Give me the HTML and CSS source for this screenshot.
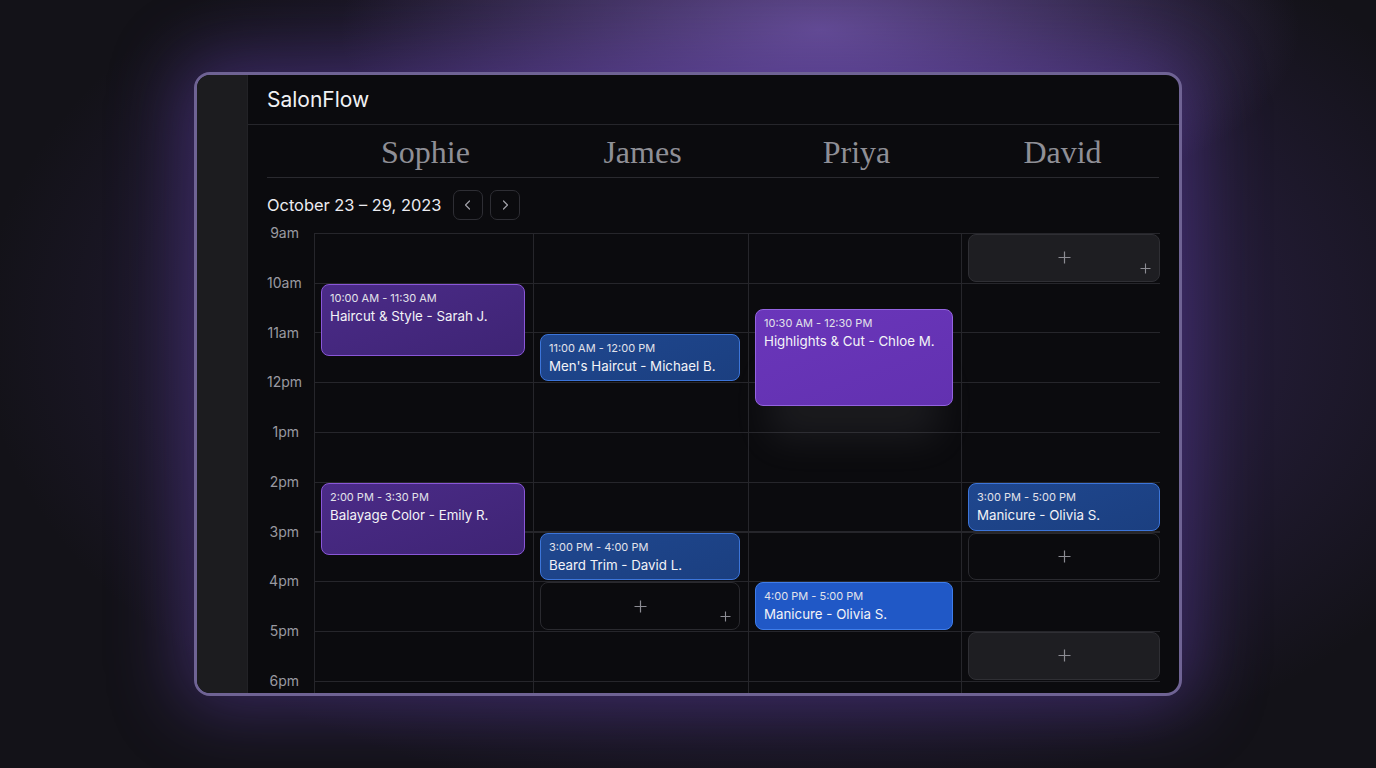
FILE: index.html
```html
<!DOCTYPE html>
<html lang="en">
<head>
  <meta charset="UTF-8">
  <title>SalonFlow – Staff Calendar</title>
  <link rel="stylesheet" href="styles.css">
</head>
<body>
  <div class="window">
    <aside class="sidebar"></aside>
    <main class="main">
      <header class="topbar">SalonFlow</header>
      <div class="content">
        <div class="staff-row">
          <span></span>
          <div class="staff">Sophie</div>
          <div class="staff">James</div>
          <div class="staff">Priya</div>
          <div class="staff">David</div>
        </div>

        <div class="week-bar">
          <span class="week-label">October 23 – 29, 2023</span>
          <button class="nav-btn" aria-label="Previous week">
            <svg width="12" height="12" viewBox="0 0 12 12"><path d="M7.5 2 L3.5 6 L7.5 10" fill="none" stroke="currentColor" stroke-width="1.2" stroke-linecap="round" stroke-linejoin="round"/></svg>
          </button>
          <button class="nav-btn" aria-label="Next week">
            <svg width="12" height="12" viewBox="0 0 12 12"><path d="M4.5 2 L8.5 6 L4.5 10" fill="none" stroke="currentColor" stroke-width="1.2" stroke-linecap="round" stroke-linejoin="round"/></svg>
          </button>
        </div>

        <div class="schedule">
          <!-- hour labels, one per two half-hour rows -->
          <div class="hour" style="grid-row: 1">9am</div>
          <div class="hour" style="grid-row: 3">10am</div>
          <div class="hour" style="grid-row: 5">11am</div>
          <div class="hour" style="grid-row: 7">12pm</div>
          <div class="hour" style="grid-row: 9">1pm</div>
          <div class="hour" style="grid-row: 11">2pm</div>
          <div class="hour" style="grid-row: 13">3pm</div>
          <div class="hour" style="grid-row: 15">4pm</div>
          <div class="hour" style="grid-row: 17">5pm</div>
          <div class="hour" style="grid-row: 19">6pm</div>

          <!-- staff lanes with hour lines -->
          <div class="lane" style="grid-column: 2"></div>
          <div class="lane" style="grid-column: 3"></div>
          <div class="lane" style="grid-column: 4"></div>
          <div class="lane" style="grid-column: 5"></div>

          <!-- Sophie -->
          <div class="event purple" style="grid-column: 2; grid-row: 3 / 6">
            <div class="ev-time">10:00 AM - 11:30 AM</div>
            <div class="ev-title">Haircut &amp; Style - Sarah J.</div>
          </div>
          <div class="event purple" style="grid-column: 2; grid-row: 11 / 14">
            <div class="ev-time">2:00 PM - 3:30 PM</div>
            <div class="ev-title">Balayage Color - Emily R.</div>
          </div>

          <!-- James -->
          <div class="event blue" style="grid-column: 3; grid-row: 5 / 7">
            <div class="ev-time">11:00 AM - 12:00 PM</div>
            <div class="ev-title">Men's Haircut - Michael B.</div>
          </div>
          <div class="event blue" style="grid-column: 3; grid-row: 13 / 15">
            <div class="ev-time">3:00 PM - 4:00 PM</div>
            <div class="ev-title">Beard Trim - David L.</div>
          </div>
          <div class="slot outline" style="grid-column: 3; grid-row: 15 / 17">
            <svg class="plus" width="13" height="13" viewBox="0 0 13 13"><path d="M6.5 0.5v12M0.5 6.5h12" stroke="currentColor" stroke-width="1.2"/></svg>
            <svg class="plus-sm" width="11" height="11" viewBox="0 0 11 11"><path d="M5.5 0.5v10M0.5 5.5h10" stroke="currentColor" stroke-width="1.1"/></svg>
          </div>

          <!-- Priya -->
          <div class="event violet" style="grid-column: 4; grid-row: 4 / 8">
            <div class="ev-time">10:30 AM - 12:30 PM</div>
            <div class="ev-title">Highlights &amp; Cut - Chloe M.</div>
          </div>
          <div class="event azure" style="grid-column: 4; grid-row: 15 / 17">
            <div class="ev-time">4:00 PM - 5:00 PM</div>
            <div class="ev-title">Manicure - Olivia S.</div>
          </div>

          <!-- David -->
          <div class="slot filled last" style="grid-column: 5; grid-row: 1 / 3">
            <svg class="plus" width="13" height="13" viewBox="0 0 13 13"><path d="M6.5 0.5v12M0.5 6.5h12" stroke="currentColor" stroke-width="1.2"/></svg>
            <svg class="plus-sm" width="11" height="11" viewBox="0 0 11 11"><path d="M5.5 0.5v10M0.5 5.5h10" stroke="currentColor" stroke-width="1.1"/></svg>
          </div>
          <div class="event blue last" style="grid-column: 5; grid-row: 11 / 13">
            <div class="ev-time">3:00 PM - 5:00 PM</div>
            <div class="ev-title">Manicure - Olivia S.</div>
          </div>
          <div class="slot outline last" style="grid-column: 5; grid-row: 13 / 15">
            <svg class="plus" width="13" height="13" viewBox="0 0 13 13"><path d="M6.5 0.5v12M0.5 6.5h12" stroke="currentColor" stroke-width="1.2"/></svg>
          </div>
          <div class="slot filled last" style="grid-column: 5; grid-row: 17 / 19">
            <svg class="plus" width="13" height="13" viewBox="0 0 13 13"><path d="M6.5 0.5v12M0.5 6.5h12" stroke="currentColor" stroke-width="1.2"/></svg>
          </div>
        </div>
      </div>
    </main>
  </div>
</body>
</html>
```

FILE: styles.css
```css
:root {
  --line: #26262b;
  --muted: #9a9aa1;
  --hour: 49.75px;
}
html, body {
  margin: 0;
  padding: 0;
}
body {
  height: 100vh;
  display: flex;
  align-items: center;
  justify-content: center;
  font-family: 'Inter', 'Noto Sans', sans-serif;
  color: #ececf1;
  background:
    radial-gradient(ellipse 480px 200px at 820px 30px, rgba(125, 95, 185, 0.7), rgba(125, 95, 185, 0) 100%),
    radial-gradient(ellipse 780px 480px at 760px 330px, rgba(92, 62, 160, 0.55), rgba(92, 62, 160, 0) 100%),
    #131218;
  overflow: hidden;
}
.window {
  width: 988px;
  height: 624px;
  box-sizing: border-box;
  border: 3px solid #6f6394;
  border-radius: 16px;
  overflow: hidden;
  display: flex;
  background: #0b0b0e;
  box-shadow: 0 0 70px 14px rgba(105, 70, 185, 0.42);
}
.sidebar {
  width: 50px;
  flex-shrink: 0;
  background: #1c1c1f;
  border-right: 1px solid #222226;
}
.main {
  flex: 1;
  min-width: 0;
  overflow: hidden;
}
.topbar {
  height: 50px;
  box-sizing: border-box;
  padding: 0 19px;
  display: flex;
  align-items: center;
  font-size: 21px;
  color: #f1f1f4;
  border-bottom: 1px solid var(--line);
}
.content {
  padding: 0 20px 0 19px;
}
.staff-row,
.schedule {
  display: grid;
  grid-template-columns: 47px 219px 215px 213px 199px;
}
.staff-row {
  height: 52px;
  border-bottom: 1px solid #2a2a2f;
  align-items: center;
}
.staff {
  text-align: center;
  font-family: 'Liberation Serif', 'DejaVu Serif', serif;
  font-size: 32px;
  color: #8f8f96;
  padding-top: 3px;
  padding-left: 4px;
}
.week-bar {
  height: 54px;
  display: flex;
  align-items: center;
  gap: 7px;
}
.week-label {
  font-size: 16.4px;
  color: #ececf1;
  margin-right: 5px;
}
.nav-btn {
  width: 30px;
  height: 30px;
  padding: 0;
  display: flex;
  align-items: center;
  justify-content: center;
  background: transparent;
  border: 1px solid #2e2e34;
  border-radius: 7px;
  color: #a2a2a9;
}
.schedule {
  margin-top: 1px;
  grid-template-rows: repeat(20, calc(var(--hour) / 2));
}
.hour {
  grid-column: 1;
  align-self: start;
  transform: translateY(-50%);
  text-align: right;
  padding-right: 15px;
  font-size: 14px;
  line-height: 16px;
  color: var(--muted);
}
.lane {
  grid-row: 1 / -1;
  border-left: 1px solid var(--line);
  background-image: repeating-linear-gradient(to bottom, var(--line) 0, var(--line) 1px, transparent 1px, transparent var(--hour));
}
.event,
.slot {
  margin: 1px 8px 1px 7px;
  border-radius: 8px;
  box-sizing: border-box;
  position: relative;
  z-index: 1;
}
.last {
  margin-right: 0;
}
.event {
  padding: 6px 8px;
  border: 1.5px solid;
}
.ev-time {
  font-size: 11px;
  line-height: 15px;
  color: #e2e2ea;
}
.ev-title {
  margin-top: 1px;
  font-size: 13.3px;
  line-height: 18px;
  color: #f3f3f7;
  white-space: nowrap;
}
.purple {
  background: linear-gradient(160deg, #4b2b88, #3e2474);
  border-color: #8a57d8;
}
.violet {
  background: linear-gradient(160deg, #6a36ba, #6231b0);
  border-color: #9464e0;
  box-shadow: 0 48px 38px -14px rgba(190, 190, 200, 0.09);
}
.blue {
  background: linear-gradient(160deg, #1f478f, #1b3f80);
  border-color: #3c75da;
}
.azure {
  background: #2058c6;
  border-color: #3f7dea;
}
.slot {
  display: flex;
  align-items: center;
  justify-content: center;
  color: #8c8c93;
  border: 1px solid #2a2a2f;
}
.slot.filled {
  background: #1e1e22;
  border-color: #2f2f34;
}
.slot.outline {
  background: #0b0b0e;
}
.plus-sm {
  position: absolute;
  right: 8px;
  bottom: 7px;
}
```
